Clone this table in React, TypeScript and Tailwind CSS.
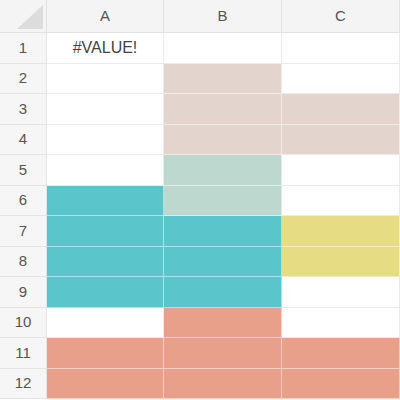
import { Fragment } from "react";

const cols = ["A", "B", "C"];

const fills: Record<string, string> = {
  B2: "bg-[#e3d5cd] border-white/50",
  B3: "bg-[#e3d5cd] border-white/50",
  B4: "bg-[#e3d5cd] border-white/50",
  C3: "bg-[#e3d5cd] border-white/50",
  C4: "bg-[#e3d5cd] border-white/50",
  B5: "bg-[#bdd8cf] border-white/50",
  B6: "bg-[#bdd8cf] border-white/50",
  A6: "bg-[#5bc5cc] border-white/50",
  A7: "bg-[#5bc5cc] border-white/50",
  A8: "bg-[#5bc5cc] border-white/50",
  A9: "bg-[#5bc5cc] border-white/50",
  B7: "bg-[#5bc5cc] border-white/50",
  B8: "bg-[#5bc5cc] border-white/50",
  B9: "bg-[#5bc5cc] border-white/50",
  C7: "bg-[#e5dc84] border-white/50",
  C8: "bg-[#e5dc84] border-white/50",
  B10: "bg-[#e9a08a] border-white/50",
  A11: "bg-[#e9a08a] border-white/50",
  B11: "bg-[#e9a08a] border-white/50",
  C11: "bg-[#e9a08a] border-white/50",
  A12: "bg-[#e9a08a] border-white/50",
  B12: "bg-[#e9a08a] border-white/50",
  C12: "bg-[#e9a08a] border-white/50",
};

const values: Record<string, string> = {
  A1: "#VALUE!",
};

export default function App() {
  const rows = Array.from({ length: 12 }, (_, i) => i + 1);

  return (
    <div
      className="w-[400px] h-[400px] bg-white overflow-hidden grid grid-cols-[47px_117px_118px_118px] grid-rows-[33px_31px_30px_31px_30px_31px_30px_31px_30px_31px_30px_31px_30px] text-[#555]"
      style={{ fontFamily: '"Liberation Sans", Arial, sans-serif' }}
    >
      {/* Corner */}
      <div className="relative bg-[#f4f4f4] border-r border-b border-[#e2e2e2]">
        <svg className="absolute left-[17px] top-[5px]" width="26" height="24" viewBox="0 0 26 24">
          <polygon points="26,0 26,24 0,24" fill="#dcdcdc" />
        </svg>
      </div>

      {/* Column headers */}
      {cols.map((c) => (
        <div
          key={c}
          className="flex items-center justify-center bg-[#f4f4f4] border-r border-b border-[#e2e2e2] text-[15px] text-[#555]"
        >
          {c}
        </div>
      ))}

      {rows.map((r) => (
        <Fragment key={r}>
          <div className="flex items-center justify-center bg-[#f6f6f6] border-r border-b border-[#e4e4e4] text-[15px] text-[#555]">
            {r}
          </div>
          {cols.map((c) => {
            const id = c + r;
            const fill = fills[id] ?? "bg-white border-[#ebebeb]";
            return (
              <div
                key={id}
                className={"flex items-center justify-center border-r border-b text-[16px] text-[#444] " + fill}
              >
                {values[id] ?? ""}
              </div>
            );
          })}
        </Fragment>
      ))}
    </div>
  );
}
